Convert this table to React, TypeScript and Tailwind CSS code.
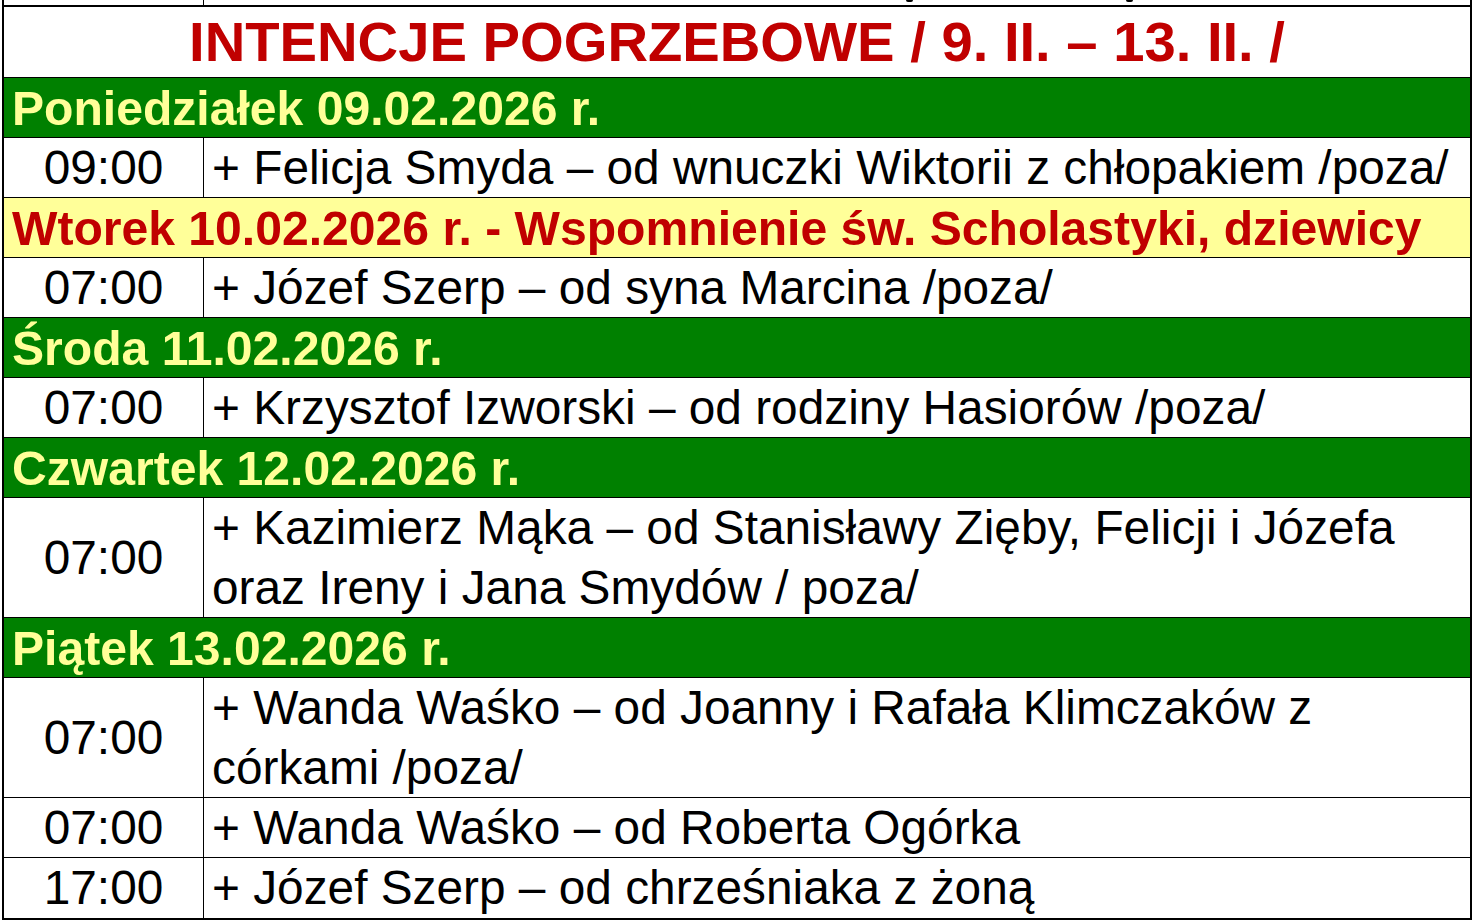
import React from 'react';

type Entry = { time: string; lines: string[] };
type Day = { label: string; tone: 'green' | 'yellow'; entries: Entry[] };

const days: Day[] = [
  {
    label: 'Poniedziałek 09.02.2026 r.',
    tone: 'green',
    entries: [{ time: '09:00', lines: ['+ Felicja Smyda – od wnuczki Wiktorii z chłopakiem /poza/'] }],
  },
  {
    label: 'Wtorek 10.02.2026 r. - Wspomnienie św. Scholastyki, dziewicy',
    tone: 'yellow',
    entries: [{ time: '07:00', lines: ['+ Józef Szerp – od syna Marcina /poza/'] }],
  },
  {
    label: 'Środa 11.02.2026 r.',
    tone: 'green',
    entries: [{ time: '07:00', lines: ['+ Krzysztof Izworski – od rodziny Hasiorów /poza/'] }],
  },
  {
    label: 'Czwartek 12.02.2026 r.',
    tone: 'green',
    entries: [
      {
        time: '07:00',
        lines: ['+ Kazimierz Mąka – od Stanisławy Zięby, Felicji i Józefa', 'oraz Ireny i Jana Smydów / poza/'],
      },
    ],
  },
  {
    label: 'Piątek 13.02.2026 r.',
    tone: 'green',
    entries: [
      { time: '07:00', lines: ['+ Wanda Waśko – od Joanny i Rafała Klimczaków z', 'córkami /poza/'] },
      { time: '07:00', lines: ['+ Wanda Waśko – od Roberta Ogórka'] },
      { time: '17:00', lines: ['+ Józef Szerp – od chrześniaka z żoną'] },
    ],
  },
];

const DayRow = ({ day }: { day: Day }) => (
  <div
    className={
      day.tone === 'green'
        ? 'h-[60px] border-b border-black bg-[#008000] pl-[8px] text-[48.1px] font-bold leading-[60px] whitespace-nowrap text-[#ffff99]'
        : 'h-[60px] border-b border-black bg-[#ffff99] pl-[8px] text-[48.1px] font-bold leading-[60px] whitespace-nowrap text-[#c00000]'
    }
  >
    {day.label}
  </div>
);

const EntryRow = ({ entry, last }: { entry: Entry; last: boolean }) => {
  const tall = entry.lines.length > 1;
  return (
    <div
      className={`flex ${tall ? 'h-[120px]' : 'h-[60px]'} ${last ? '' : 'border-b border-black'} text-[47.8px] text-black`}
    >
      <div className="flex w-[200px] shrink-0 items-center justify-center border-r border-black">
        {entry.time}
      </div>
      <div className="pl-[8px] leading-[60px] whitespace-nowrap">
        {entry.lines.map((l, i) => (
          <div key={i}>{l}</div>
        ))}
      </div>
    </div>
  );
};

export default function App() {
  const total = days.reduce((n, d) => n + d.entries.length, 0);
  let seen = 0;

  return (
    <div className="min-h-screen bg-white font-['Liberation_Sans',Arial,sans-serif]">
      <div className="ml-[2px] w-[1470px] border-x-2 border-b-2 border-black">
        {/* cut-off row from above */}
        <div className="relative flex h-[7px] border-b-2 border-black">
          <div className="w-[200px] border-r border-black" />
          <span className="absolute left-[902px] top-0 h-[2px] w-[7px] rounded-b-full bg-black" />
          <span className="absolute left-[1122px] top-0 h-[2px] w-[7px] rounded-b-full bg-black" />
        </div>

        <div className="h-[71px] border-b border-black text-center text-[56.2px] font-bold leading-[70px] text-[#c00000]">
          INTENCJE POGRZEBOWE / 9. II. – 13. II. /
        </div>

        {days.map((d) => (
          <React.Fragment key={d.label}>
            <DayRow day={d} />
            {d.entries.map((e, i) => {
              seen += 1;
              return <EntryRow key={i} entry={e} last={seen === total} />;
            })}
          </React.Fragment>
        ))}
      </div>
    </div>
  );
}
